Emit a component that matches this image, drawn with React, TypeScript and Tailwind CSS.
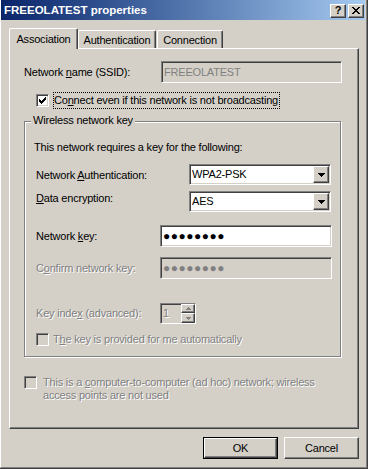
import React from "react";

// Win2000 / XP classic dialog look
const sunken =
  "border border-t-[#808080] border-l-[#808080] border-r-white border-b-white shadow-[inset_1px_1px_0_#404040,inset_-1px_-1px_0_#d4d0c8]";
const raised =
  "border border-t-white border-l-white border-r-[#404040] border-b-[#404040] shadow-[inset_-1px_-1px_0_#808080]";
const grey = "text-[#808080] [text-shadow:1px_1px_0_#fff]";

function Check({ checked = false, disabled = false }: { checked?: boolean; disabled?: boolean }) {
  return (
    <span
      className={`flex h-[13px] w-[13px] shrink-0 items-center justify-center ${sunken} ${
        disabled ? "bg-[#d4d0c8]" : "bg-white"
      }`}
    >
      {checked && (
        <svg width="7" height="7" viewBox="0 0 7 7" shapeRendering="crispEdges">
          <path
            d="M0 2h1v3H0z M1 3h1v3H1z M2 4h1v3H2z M3 3h1v3H3z M4 2h1v3H4z M5 1h1v3H5z M6 0h1v3H6z"
            fill="#000"
          />
        </svg>
      )}
    </span>
  );
}

function Combo({ value }: { value: string }) {
  return (
    <div className={`flex h-[21px] w-[142px] items-center bg-white ${sunken}`}>
      <span className="flex-1 pl-[2px]">{value}</span>
      <span className={`mr-[1px] flex h-[17px] w-[16px] items-center justify-center bg-[#d4d0c8] ${raised}`}>
        <svg width="7" height="4" viewBox="0 0 7 4" shapeRendering="crispEdges">
          <path d="M0 0h7v1H0z M1 1h5v1H1z M2 2h3v1H2z M3 3h1v1H3z" fill="#000" />
        </svg>
      </span>
    </div>
  );
}

function Edit({
  value,
  width,
  disabled = false,
  password = false,
}: {
  value: string;
  width: string;
  disabled?: boolean;
  password?: boolean;
}) {
  return (
    <div
      className={`flex h-[22px] items-center ${width} ${sunken} ${
        disabled ? "bg-[#d4d0c8] text-[#808080]" : "bg-white"
      }`}
    >
      <span className={`pl-[2px] ${password ? "text-[12px] tracking-[0.5px]" : ""}`}>{value}</span>
    </div>
  );
}

function Tab({ label, active = false, width }: { label: string; active?: boolean; width: string }) {
  return (
    <div
      className={`flex items-start justify-center rounded-t-[2px] border-l border-t border-r border-l-white border-t-white border-r-[#404040] bg-[#d4d0c8] shadow-[inset_-1px_0_0_#808080] ${width} ${
        active ? "relative z-10 -mb-[1px] h-[21px] pt-[4px]" : "h-[18px] pt-[3px]"
      }`}
    >
      {label}
    </div>
  );
}

function Button({ label, isDefault = false }: { label: string; isDefault?: boolean }) {
  return (
    <div className={`h-[22px] w-[75px] ${isDefault ? "border border-black" : ""}`}>
      <div className={`flex h-full w-full items-center justify-center bg-[#d4d0c8] ${raised}`}>
        {label}
      </div>
    </div>
  );
}

export default function App() {
  return (
    <div className="h-[469px] w-[368px] overflow-hidden border-r border-b border-[#404040] bg-[#d4d0c8] font-['Liberation_Sans',Arial,sans-serif] text-[11px] leading-[13px] tracking-[-0.2px] text-black">
      <div className="flex h-full flex-col border-r border-b border-l border-r-[#808080] border-b-[#808080] border-l-white">
        {/* title bar */}
        <div className="mr-[1px] flex h-[20px] items-center bg-gradient-to-r from-[#0a246a] to-[#a6caf0] pl-[3px]">
          <span className="flex-1 text-[11.5px] font-bold tracking-normal text-white">FREEOLATEST properties</span>
          <div className="flex gap-[2px] pr-[1px] pt-[1px]">
            <span className={`flex h-[14px] w-[16px] items-center justify-center bg-[#d4d0c8] text-[11px] font-bold leading-none ${raised}`}>
              ?
            </span>
            <span className={`flex h-[14px] w-[16px] items-center justify-center bg-[#d4d0c8] ${raised}`}>
              <svg width="8" height="7" viewBox="0 0 8 7" shapeRendering="crispEdges">
                <path
                  d="M0 0h2v1H0z M6 0h2v1H6z M1 1h2v1H1z M5 1h2v1H5z M2 2h4v1H2z M3 3h2v1H3z M2 4h4v1H2z M1 5h2v1H1z M5 5h2v1H5z M0 6h2v1H0z M6 6h2v1H6z"
                  fill="#000"
                />
              </svg>
            </span>
          </div>
        </div>

        {/* tabs */}
        <div className="mt-[8px] flex h-[20px] items-end pl-[8px]">
          <Tab label="Association" active width="w-[69px]" />
          <Tab label="Authentication" width="w-[78px]" />
          <div className="w-[1px]" />
          <Tab label="Connection" width="w-[66px]" />
        </div>

        {/* tab page */}
        <div className="ml-[8px] h-[381px] w-[350px] border-l border-t border-r border-b border-l-white border-t-white border-r-[#404040] border-b-[#404040] shadow-[inset_-1px_-1px_0_#808080]">
          <div className="flex flex-col pl-[14px]">
            <div className="mt-[12px] flex h-[22px] items-center">
              <span className="w-[137px]">
                Network <u>n</u>ame (SSID):
              </span>
              <Edit value="FREEOLATEST" width="w-[181px]" disabled />
            </div>

            <div className="mt-[9px] flex h-[17px] items-center pl-[12px]">
              <Check checked />
              <span className="ml-[4px] border border-dotted border-black py-[1px] pr-[1px]">
                Co<u>n</u>nect even if this network is not broadcasting
              </span>
            </div>

            {/* group box */}
            <div className="mt-[12px] flex w-[317px] flex-col border border-[#808080] pb-[10px] shadow-[1px_1px_0_#fff,inset_1px_1px_0_#fff]">
              <span className="-mt-[8px] ml-[6px] w-fit bg-[#d4d0c8] px-[2px]">Wireless network key</span>

              <span className="ml-[9px] mt-[14px]">This network requires a key for the following:</span>

              <div className="ml-[11px] mt-[10px] flex h-[21px] items-center">
                <span className="w-[153px] pt-[2px]">
                  Network <u>A</u>uthentication:
                </span>
                <Combo value="WPA2-PSK" />
              </div>

              <div className="ml-[11px] mt-[6px] flex h-[21px] items-start">
                <span className="w-[153px] pt-[1px]">
                  <u>D</u>ata encryption:
                </span>
                <Combo value="AES" />
              </div>

              <div className="ml-[11px] mt-[13px] flex h-[22px] items-center">
                <span className="w-[124px]">
                  Network <u>k</u>ey:
                </span>
                <Edit value="●●●●●●●●" width="w-[172px]" password />
              </div>

              <div className="ml-[11px] mt-[10px] flex h-[22px] items-center">
                <span className={`w-[124px] ${grey}`}>
                  C<u>o</u>nfirm network key:
                </span>
                <Edit value="●●●●●●●●" width="w-[172px]" password disabled />
              </div>

              <div className="ml-[11px] mt-[24px] flex h-[21px] items-center">
                <span className={`w-[124px] ${grey}`}>
                  Key inde<u>x</u> (advanced):
                </span>
                <div className={`flex h-[21px] w-[36px] bg-[#d4d0c8] ${sunken}`}>
                  <span className={`flex-1 pl-[2px] pt-[3px] ${grey}`}>1</span>
                  <div className="flex w-[14px] flex-col">
                    <span className={`flex h-[9px] items-center justify-center bg-[#d4d0c8] ${raised}`}>
                      <svg width="5" height="3" viewBox="0 0 5 3" shapeRendering="crispEdges">
                        <path d="M2 0h1v1H2z M1 1h3v1H1z M0 2h5v1H0z" fill="#808080" />
                      </svg>
                    </span>
                    <span className={`flex h-[10px] items-center justify-center bg-[#d4d0c8] ${raised}`}>
                      <svg width="5" height="3" viewBox="0 0 5 3" shapeRendering="crispEdges">
                        <path d="M0 0h5v1H0z M1 1h3v1H1z M2 2h1v1H2z" fill="#808080" />
                      </svg>
                    </span>
                  </div>
                </div>
              </div>

              <div className="ml-[11px] mt-[9px] flex h-[13px] items-center">
                <Check disabled />
                <span className={`ml-[4px] ${grey}`}>
                  T<u>h</u>e key is provided for me automatically
                </span>
              </div>
            </div>

            <div className="mt-[19px] flex items-start">
              <Check disabled />
              <span className={`ml-[6px] ${grey}`}>
                This is a <u>c</u>omputer-to-computer (ad hoc) network; wireless
                <br />
                access points are not used
              </span>
            </div>
          </div>
        </div>

        {/* buttons */}
        <div className="mt-[8px] flex justify-end gap-[6px] pr-[7px]">
          <Button label="OK" isDefault />
          <Button label="Cancel" />
        </div>
      </div>
    </div>
  );
}
